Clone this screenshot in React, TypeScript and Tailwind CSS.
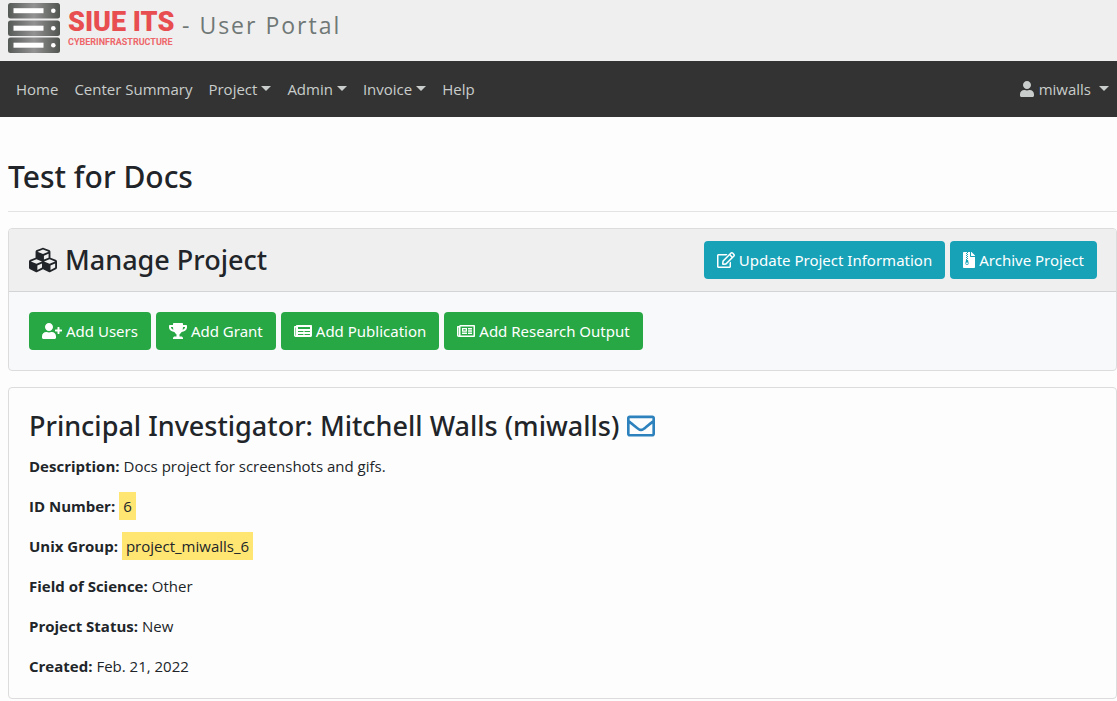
import type { ReactNode } from "react";
import {
  FaCubes,
  FaFileArchive,
  FaNewspaper,
  FaRegEdit,
  FaRegEnvelope,
  FaRegNewspaper,
  FaTrophy,
  FaUser,
  FaUserPlus,
} from "react-icons/fa";

function ServerLogo() {
  return (
    <svg viewBox="0 0 52 50" className="h-[50px] w-[52px] shrink-0" aria-hidden="true">
      <defs>
        <linearGradient id="metal" x1="0" x2="1" y1="0" y2="0">
          <stop offset="0" stopColor="#565a57" />
          <stop offset="0.5" stopColor="#929292" />
          <stop offset="1" stopColor="#50544f" />
        </linearGradient>
      </defs>
      {[0, 17.5, 34.5].map((y) => (
        <g key={y}>
          <rect x="0" y={y} width="52" height="15.5" rx="2.5" fill="url(#metal)" />
          <rect x="5.5" y={y + 5.2} width="30" height="5" fill="#fff" />
          <circle cx="45.3" cy={y + 7.7} r="2.3" fill="#fff" />
        </g>
      ))}
    </svg>
  );
}

function Caret() {
  return (
    <span
      aria-hidden="true"
      className="mb-0.5 ml-1 border-x-5 border-t-5 border-x-transparent border-t-current"
    />
  );
}

function ActionButton({ icon, tone, children }: { icon: ReactNode; tone: "info" | "success"; children: ReactNode }) {
  const color = tone === "info" ? "bg-[#17a2b8]" : "bg-[#28a745]";
  return (
    <button
      type="button"
      className={`flex h-[38px] items-center gap-1 rounded px-[13px] font-['Noto_Sans',sans-serif] text-white ${color}`}
    >
      {icon}
      {children}
    </button>
  );
}

function Detail({ label, mark, children }: { label: string; mark?: boolean; children: ReactNode }) {
  return (
    <div className="flex h-6 items-center gap-1">
      <dt className="font-bold">{label}</dt>
      <dd className={mark ? "bg-[#ffe673] px-1 py-0.5" : ""}>{children}</dd>
    </div>
  );
}

const navItems = [
  { label: "Home" },
  { label: "Center Summary" },
  { label: "Project", menu: true },
  { label: "Admin", menu: true },
  { label: "Invoice", menu: true },
  { label: "Help" },
];

export default function App() {
  return (
    <div className="min-h-screen bg-[#fdfdfd] font-['Open_Sans','Noto_Sans',sans-serif] text-[15px] leading-6 text-[#212529]">
      <header className="flex h-[61px] items-start gap-2 bg-[#efefef] px-2 pt-[3px]">
        <a href="#home" className="flex items-center gap-2" aria-label="SIUE ITS Cyberinfrastructure">
          <ServerLogo />
          <span className="flex w-[106px] flex-col font-['Roboto',sans-serif] whitespace-nowrap text-[#e84d50]">
            <span className="text-[27px] leading-7 font-black">SIUE ITS</span>
            <span className="text-[9px] leading-3 font-bold text-[#ee6669]">CYBERINFRASTRUCTURE</span>
          </span>
        </a>
        <span className="pt-1 text-[23px] leading-9 tracking-[2px] text-[#6f7876]">- User Portal</span>
      </header>

      <nav className="flex h-14 items-center justify-between bg-[#333] pl-2 text-[#c9cdcb]">
        <ul className="flex">
          {navItems.map((item) => (
            <li key={item.label}>
              <a href="#nav" className="flex items-center px-2">
                {item.label}
                {item.menu && <Caret />}
              </a>
            </li>
          ))}
        </ul>
        <button type="button" className="flex items-center gap-1 px-2">
          <FaUser className="size-4" />
          miwalls
          <Caret />
        </button>
      </nav>

      <main className="pl-2">
        <h1 className="border-b border-[#e3e3e3] pt-10 pb-[14px] font-['Noto_Sans',sans-serif] text-[30px] leading-10 font-medium">
          Test for Docs
        </h1>

        <section className="mt-4 overflow-hidden rounded border border-[#dcdcdc] bg-[#f8f9fb]">
          <div className="flex items-center justify-between border-b border-[#d2d4d5] bg-[#efefef] py-3 pr-[19px] pl-5">
            <h2 className="flex items-center gap-2 font-['Noto_Sans',sans-serif] text-[27px] leading-9 font-medium">
              <FaCubes className="size-7" />
              Manage Project
            </h2>
            <div className="flex gap-[5px]">
              <ActionButton tone="info" icon={<FaRegEdit className="h-4 w-[18px]" />}>Update Project Information</ActionButton>
              <ActionButton tone="info" icon={<FaFileArchive className="h-4 w-3" />}>Archive Project</ActionButton>
            </div>
          </div>
          <div className="flex gap-[5px] p-5">
            <ActionButton tone="success" icon={<FaUserPlus className="h-4 w-5" />}>Add Users</ActionButton>
            <ActionButton tone="success" icon={<FaTrophy className="h-4 w-[18px]" />}>Add Grant</ActionButton>
            <ActionButton tone="success" icon={<FaNewspaper className="h-4 w-[18px]" />}>Add Publication</ActionButton>
            <ActionButton tone="success" icon={<FaRegNewspaper className="h-4 w-[18px]" />}>Add Research Output</ActionButton>
          </div>
        </section>

        <section className="mt-4 rounded border border-[#dcdcdc] p-5">
          <h2 className="flex items-center gap-2 font-['Noto_Sans',sans-serif] text-[27px] leading-9 font-medium">
            Principal Investigator: Mitchell Walls (miwalls)
            <a href="mailto:miwalls" aria-label="Email miwalls">
              <FaRegEnvelope className="size-7 text-[#2d82bd]" />
            </a>
          </h2>
          <dl className="mt-[10px] flex flex-col gap-4">
            <Detail label="Description:">Docs project for screenshots and gifs.</Detail>
            <Detail label="ID Number:" mark>6</Detail>
            <Detail label="Unix Group:" mark>project_miwalls_6</Detail>
            <Detail label="Field of Science:">Other</Detail>
            <Detail label="Project Status:">New</Detail>
            <Detail label="Created:">Feb. 21, 2022</Detail>
          </dl>
        </section>
      </main>
    </div>
  );
}
